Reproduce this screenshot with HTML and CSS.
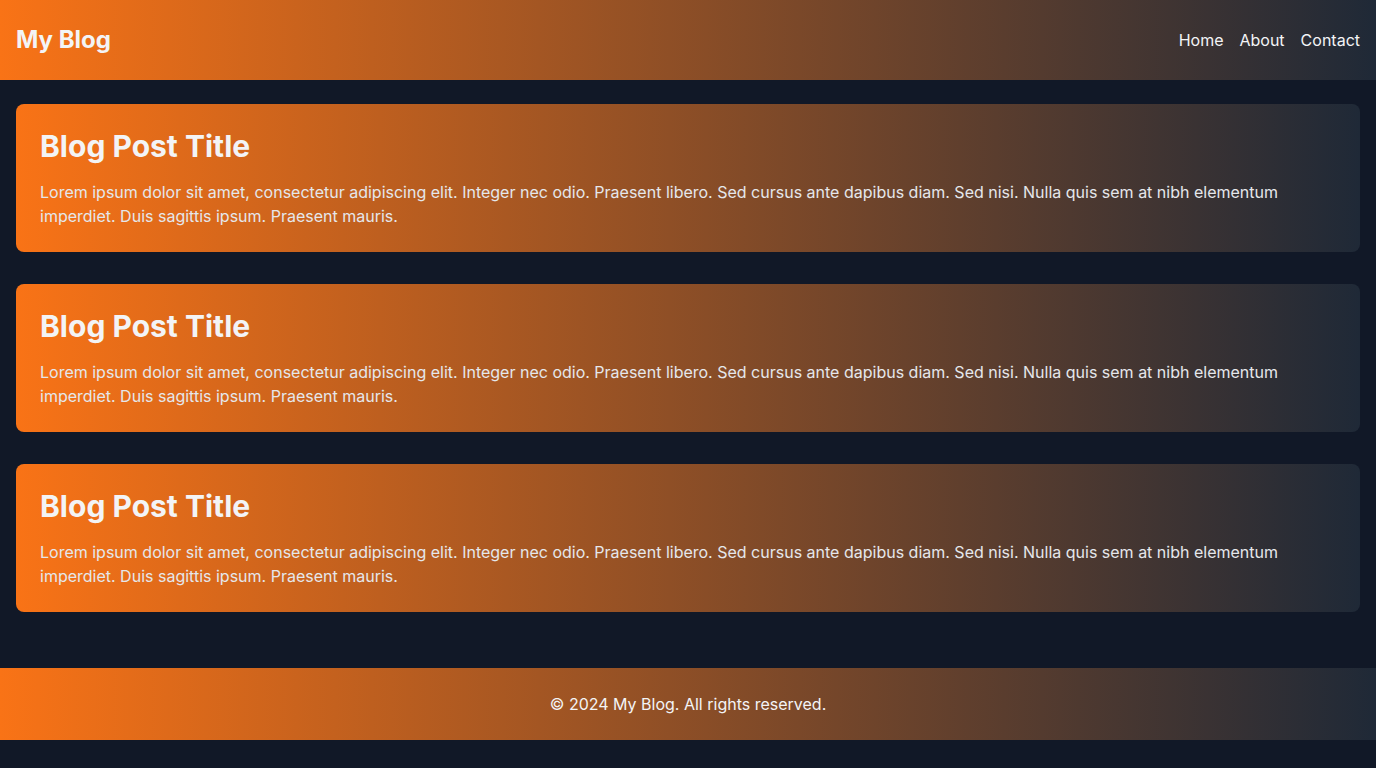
FILE: index.html
```html
<!DOCTYPE html>
<html lang="en">
<head>
<meta charset="utf-8">
<title>My Blog</title>
<link rel="stylesheet" href="styles.css">
</head>
<body>
<header class="site-header">
  <h1 class="logo">My Blog</h1>
  <nav class="nav">
    <a href="#">Home</a>
    <a href="#">About</a>
    <a href="#">Contact</a>
  </nav>
</header>
<main class="content">
  <article class="post">
    <h2 class="post-title">Blog Post Title</h2>
    <p class="post-body">Lorem ipsum dolor sit amet, consectetur adipiscing elit. Integer nec odio. Praesent libero. Sed cursus ante dapibus diam. Sed nisi. Nulla quis sem at nibh elementum imperdiet. Duis sagittis ipsum. Praesent mauris.</p>
  </article>
  <article class="post">
    <h2 class="post-title">Blog Post Title</h2>
    <p class="post-body">Lorem ipsum dolor sit amet, consectetur adipiscing elit. Integer nec odio. Praesent libero. Sed cursus ante dapibus diam. Sed nisi. Nulla quis sem at nibh elementum imperdiet. Duis sagittis ipsum. Praesent mauris.</p>
  </article>
  <article class="post">
    <h2 class="post-title">Blog Post Title</h2>
    <p class="post-body">Lorem ipsum dolor sit amet, consectetur adipiscing elit. Integer nec odio. Praesent libero. Sed cursus ante dapibus diam. Sed nisi. Nulla quis sem at nibh elementum imperdiet. Duis sagittis ipsum. Praesent mauris.</p>
  </article>
</main>
<footer class="site-footer">
  <p>© 2024 My Blog. All rights reserved.</p>
</footer>
</body>
</html>
```
FILE: styles.css
```css
* { box-sizing: border-box; }
html, body {
  margin: 0;
  padding: 0;
  background: #111827;
  font-family: Inter, "Noto Sans", sans-serif;
  color: #f3f4f6;
}
.site-header {
  height: 80px;
  padding: 0 16px;
  display: flex;
  align-items: center;
  justify-content: space-between;
  background: linear-gradient(to right, #f97316, #1f2937);
}
.logo {
  margin: 0;
  font-size: 24px;
  line-height: 32px;
  font-weight: 700;
  color: #f3f4f6;
}
.nav {
  display: flex;
  gap: 16px;
}
.nav a {
  color: #f3f4f6;
  text-decoration: none;
  font-size: 16px;
  line-height: 24px;
}
.content {
  padding: 24px 16px;
}
.post {
  margin-bottom: 32px;
  padding: 24px;
  border-radius: 8px;
  background: linear-gradient(to right, #f97316, #1f2937);
}
.post-title {
  margin: 0 0 16px;
  font-size: 30px;
  line-height: 36px;
  font-weight: 700;
  color: #f3f4f6;
}
.post-body {
  margin: 0;
  font-size: 16px;
  line-height: 24px;
  color: #e5e7eb;
}
.site-footer {
  padding: 24px 16px;
  text-align: center;
  background: linear-gradient(to right, #f97316, #1f2937);
}
.site-footer p {
  margin: 0;
  font-size: 16px;
  line-height: 24px;
  color: #f3f4f6;
}
```
